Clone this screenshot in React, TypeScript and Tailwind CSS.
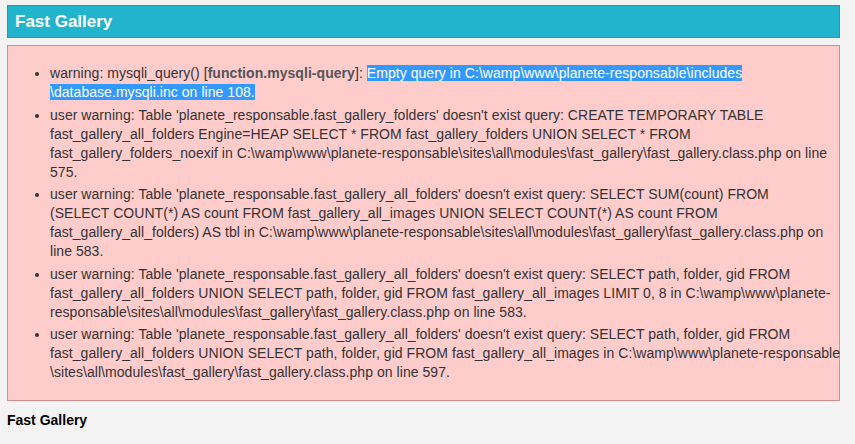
const items: string[][] = [
  [
    "user warning: Table 'planete_responsable.fast_gallery_folders' doesn't exist query: CREATE TEMPORARY TABLE",
    "fast_gallery_all_folders Engine=HEAP SELECT * FROM fast_gallery_folders UNION SELECT * FROM",
    "fast_gallery_folders_noexif in C:\\wamp\\www\\planete-responsable\\sites\\all\\modules\\fast_gallery\\fast_gallery.class.php on line",
    "575.",
  ],
  [
    "user warning: Table 'planete_responsable.fast_gallery_all_folders' doesn't exist query: SELECT SUM(count) FROM",
    "(SELECT COUNT(*) AS count FROM fast_gallery_all_images UNION SELECT COUNT(*) AS count FROM",
    "fast_gallery_all_folders) AS tbl in C:\\wamp\\www\\planete-responsable\\sites\\all\\modules\\fast_gallery\\fast_gallery.class.php on",
    "line 583.",
  ],
  [
    "user warning: Table 'planete_responsable.fast_gallery_all_folders' doesn't exist query: SELECT path, folder, gid FROM",
    "fast_gallery_all_folders UNION SELECT path, folder, gid FROM fast_gallery_all_images LIMIT 0, 8 in C:\\wamp\\www\\planete-",
    "responsable\\sites\\all\\modules\\fast_gallery\\fast_gallery.class.php on line 583.",
  ],
  [
    "user warning: Table 'planete_responsable.fast_gallery_all_folders' doesn't exist query: SELECT path, folder, gid FROM",
    "fast_gallery_all_folders UNION SELECT path, folder, gid FROM fast_gallery_all_images in C:\\wamp\\www\\planete-responsable",
    "\\sites\\all\\modules\\fast_gallery\\fast_gallery.class.php on line 597.",
  ],
];

export default function App() {
  return (
    <div
      className="min-h-[444px] bg-[#f3f3f3] pt-[5px] text-[#333]"
      style={{ fontFamily: '"Liberation Sans", Arial, sans-serif' }}
    >
      <div className="mx-[7px] w-[833px] h-[33px] flex items-center pl-[7px] bg-[#22b4cc] border border-[#4f8b95]">
        <h2 className="text-[17px] font-bold text-white">Fast Gallery</h2>
      </div>

      <div className="mx-[7px] mt-[7px] w-[833px] h-[356px] bg-[#ffcccc] border border-[#d48c8c] pt-[18px]">
        <ul className="list-disc pl-[42px] text-[14px] leading-[19px] tracking-[0.05px]">
          <li className="mb-[3.5px] whitespace-nowrap">
            warning: mysqli_query() [<b className="text-[#555]">function.mysqli-query</b>]:{" "}
            <span className="bg-[#3399ff] text-white">
              Empty query in C:\wamp\www\planete-responsable\includes
            </span>
            <br />
            <span className="bg-[#3399ff] text-white">\database.mysqli.inc on line 108.</span>
          </li>
          {items.map((lines, i) => (
            <li key={i} className="mb-[3.5px] whitespace-nowrap">
              {lines.map((line, j) => (
                <span key={j}>
                  {line}
                  {j < lines.length - 1 && <br />}
                </span>
              ))}
            </li>
          ))}
        </ul>
      </div>

      <h3 className="ml-[7px] mt-[9px] text-[14px] font-bold text-black">Fast Gallery</h3>
    </div>
  );
}
